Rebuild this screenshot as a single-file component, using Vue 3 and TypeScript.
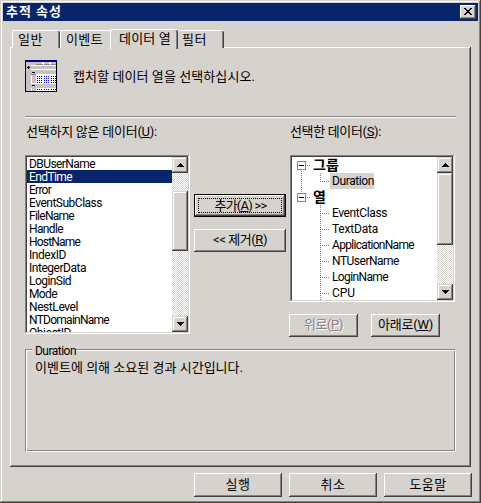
<script setup lang="ts">
import { ref, type Directive } from 'vue'

interface Item { name: string; width: number }

/* Tracks a text run so that it occupies the given width in pixels. */
const vFit: Directive<HTMLElement, number> = {
  mounted(el, { value }) {
    const n = (el.textContent ?? '').length
    const natural = el.getBoundingClientRect().width
    el.style.letterSpacing = `${(value - natural) / n}px`
  },
}

const tabs = [
  { name: '일반', width: 25, cls: 'general' },
  { name: '이벤트', width: 37, cls: 'events' },
  { name: '데이터 열', width: 52, cls: 'columns' },
  { name: '필터', width: 25, cls: 'filters' },
]
const activeTab = ref('데이터 열')

const available: Item[] = [
  { name: 'DBUserName', width: 66 },
  { name: 'EndTime', width: 43 },
  { name: 'Error', width: 22 },
  { name: 'EventSubClass', width: 73 },
  { name: 'FileName', width: 45 },
  { name: 'Handle', width: 34 },
  { name: 'HostName', width: 51 },
  { name: 'IndexID', width: 37 },
  { name: 'IntegerData', width: 57 },
  { name: 'LoginSid', width: 42 },
  { name: 'Mode', width: 28 },
  { name: 'NestLevel', width: 49 },
  { name: 'NTDomainName', width: 80 },
  { name: 'ObjectID', width: 42 },
]
const current = ref('EndTime')

const groups: { name: string; width: number; children: Item[] }[] = [
  { name: '그룹', width: 26, children: [{ name: 'Duration', width: 42 }] },
  {
    name: '열',
    width: 13,
    children: [
      { name: 'EventClass', width: 55 },
      { name: 'TextData', width: 46 },
      { name: 'ApplicationName', width: 82 },
      { name: 'NTUserName', width: 67 },
      { name: 'LoginName', width: 56 },
      { name: 'CPU', width: 23 },
    ],
  },
]
const picked = ref('Duration')
</script>

<template>
  <div class="window">
    <header class="title">
      <span v-fit="56">추적 속성</span>
      <button class="close" aria-label="닫기">
        <svg width="8" height="7" viewBox="0 0 8 7" shape-rendering="crispEdges">
          <path d="M0 0h2v1h1v1h2v-1h1v-1h2v1h-1v1h-1v1h-1v1h1v1h1v1h1v1h-2v-1h-1v-1h-2v1h-1v1h-2v-1h1v-1h1v-1h1v-1h-1v-1h-1v-1h-1z" />
        </svg>
      </button>
    </header>

    <nav class="tabs">
      <button v-for="t in tabs" :key="t.name" class="tab" :class="[t.cls, { active: t.name === activeTab }]" @click="activeTab = t.name">
        <span v-fit="t.width">{{ t.name }}</span>
      </button>
    </nav>

    <main class="panel">
      <div class="intro">
        <svg width="32" height="32" viewBox="0 0 32 32" shape-rendering="crispEdges">
          <path fill="#000" d="M0 0h32v32h-32z" />
          <path fill="#fff" d="M1 2h30v29h-30z" />
          <path fill="#000084" d="M0 0h32v2h-32z" />
          <path fill="#c6c3c6" d="M1 2h10v3h-10zM1 10h5v21h-5zM6 6h25v3h-25zM11 10h20v4h-20zM7 15h4v8h-4zM11 24h20v4h-20zM7 28h4v3h-4zM11 2h6v2h-6zM19 2h5v2h-5zM26 2h5v2h-5zM1 5h5v5h-5zM6 10h5v4h-5zM6 24h5v4h-5z" />
          <path fill="#848284" d="M11 4h7v1h-7zM19 4h6v1h-6zM26 4h5v1h-5zM6 14h5v1h-5z" />
          <path fill="#000" d="M3 6h1v3h-1zM2 7h3v1h-3zM7 12h3v1h-3zM7 25h3v1h-3z" />
          <g stroke-dasharray="1 1" fill="none">
            <path stroke="#000" d="M12 16.5h5M26 16.5h5M12 18.5h5M26 18.5h5M12 20.5h5M26 20.5h5M12 22.5h5M26 22.5h5M12 29.5h5M26 29.5h5" />
            <path stroke="#00f" d="M19 16.5h5M19 18.5h5M19 20.5h5M19 22.5h5M19 29.5h5" />
          </g>
        </svg>
        <span v-fit="182">캡처할 데이터 열을 선택하십시오.</span>
      </div>
      <div class="rule"></div>

      <div class="lists">
        <section class="side">
          <div class="label"><span v-fit="131">선택하지 않은 데이터(<u>U</u>):</span></div>
          <div class="box left-box">
            <ul class="items">
              <li v-for="i in available" :key="i.name" :class="{ selected: i.name === current }" @click="current = i.name">
                <span v-fit="i.width">{{ i.name }}</span>
              </li>
            </ul>
            <div class="scroll">
              <div class="arrow"><svg width="7" height="4" viewBox="0 0 7 4" shape-rendering="crispEdges"><path d="M3 0h1v1h1v1h1v1h1v1H0V3h1V2h1V1h1z" /></svg></div>
              <div class="thumb thumb-left"></div>
              <div class="arrow down"><svg width="7" height="4" viewBox="0 0 7 4" shape-rendering="crispEdges"><path d="M0 0h7v1H6v1H5v1H4v1H3V3H2V2H1V1H0z" /></svg></div>
            </div>
          </div>
        </section>

        <div class="moves">
          <button class="btn default"><span v-fit="52">추가(<u>A</u>) &gt;&gt;</span></button>
          <button class="btn"><span v-fit="54">&lt;&lt; 제거(<u>R</u>)</span></button>
        </div>

        <section class="side">
          <div class="label right-label"><span v-fit="91">선택한 데이터(<u>S</u>):</span></div>
          <div class="box right-box">
            <div class="tree">
              <div v-for="g in groups" :key="g.name" class="group">
                <div class="node">
                  <svg width="14" height="9" viewBox="0 0 14 9" shape-rendering="crispEdges">
                    <path fill="none" stroke="#848284" d="M.5.5h8v8h-8z" />
                    <path d="M2 4h5v1H2z" />
                    <path fill="#848284" d="M10 4h1v1h-1zM12 4h1v1h-1z" />
                  </svg>
                  <strong v-fit="g.width">{{ g.name }}</strong>
                </div>
                <div v-for="c in g.children" :key="c.name" class="leaf" @click="picked = c.name">
                  <span class="name" :class="{ picked: c.name === picked }"><span v-fit="c.width">{{ c.name }}</span></span>
                </div>
              </div>
            </div>
            <div class="scroll">
              <div class="arrow"><svg width="7" height="4" viewBox="0 0 7 4" shape-rendering="crispEdges"><path d="M3 0h1v1h1v1h1v1h1v1H0V3h1V2h1V1h1z" /></svg></div>
              <div class="thumb thumb-right"></div>
              <div class="arrow down"><svg width="7" height="4" viewBox="0 0 7 4" shape-rendering="crispEdges"><path d="M0 0h7v1H6v1H5v1H4v1H3V3H2V2H1V1H0z" /></svg></div>
            </div>
          </div>
          <div class="order">
            <button class="btn" disabled><span v-fit="39">위로(<u>P</u>)</span></button>
            <button class="btn"><span v-fit="55">아래로(<u>W</u>)</span></button>
          </div>
        </section>
      </div>

      <section class="detail">
        <h2><span v-fit="41">Duration</span></h2>
        <p><span v-fit="208">이벤트에 의해 소요된 경과 시간입니다.</span></p>
      </section>
    </main>

    <footer class="actions">
      <button class="btn"><span v-fit="25">실행</span></button>
      <button class="btn"><span v-fit="25">취소</span></button>
      <button class="btn"><span v-fit="37">도움말</span></button>
    </footer>
  </div>
</template>

<style>
body {
  background: #d6d3ce;
}
</style>

<style scoped>
* {
  box-sizing: border-box;
}
.window {
  width: 481px;
  height: 503px;
  padding: 3px;
  overflow: hidden;
  background: #d6d3ce;
  color: #000;
  font: 13px/16px Roboto, "Noto Sans CJK KR", sans-serif;
  white-space: nowrap;
  cursor: default;
  box-shadow: inset -1px -1px #424142, inset 1px 1px #d6d3ce, inset -2px -2px #848284, inset 2px 2px #fff;
}
button {
  font: inherit;
  color: inherit;
  padding: 0;
  border: 0;
  background: #d6d3ce;
}
span,
strong {
  display: inline-block;
}
u {
  text-underline-offset: 1px;
  text-decoration-thickness: 1px;
}
.title {
  display: flex;
  align-items: center;
  justify-content: space-between;
  height: 18px;
  padding: 0 2px 0 3px;
  background: #08246b;
  color: #fff;
  font-weight: 700;
}
.close,
.arrow,
.thumb {
  box-shadow: inset -1px -1px #424142, inset 1px 1px #d6d3ce, inset -2px -2px #848284, inset 2px 2px #fff;
}
.close {
  display: flex;
  width: 16px;
  height: 14px;
  padding: 3px 0 0 4px;
  box-shadow: inset -1px -1px #424142, inset 1px 1px #fff, inset -2px -2px #848284;
}

.tabs {
  display: flex;
  align-items: flex-end;
  height: 27px;
  padding-left: 9px;
}
.tab {
  height: 18px;
  padding: 0 0 0 6px;
  text-align: left;
  border-radius: 2px 2px 0 0;
  border-top: 1px solid #fff;
  border-left: 1px solid #fff;
  box-shadow: inset -1px 0 #424142, inset -2px 0 #848284;
  line-height: 15px;
}
.general {
  width: 48px;
  padding-left: 5px;
}
.events {
  width: 50px;
  padding-left: 5px;
  box-shadow: none;
}
.columns {
  width: 68px;
  padding-left: 8px;
}
.filters {
  width: 46px;
  padding-left: 4px;
  border-left: 0;
}
.tab.active {
  position: relative;
  height: 20px;
  margin-bottom: -1px;
  padding-bottom: 3px;
}

.panel {
  width: 461px;
  height: 420px;
  margin: -1px 0 0 7px;
  padding: 13px 15px 0;
  box-shadow: inset -1px -1px #424142, inset 1px 1px #fff, inset -2px -2px #848284;
}
.intro {
  display: flex;
  align-items: center;
  gap: 16px;
  height: 32px;
}
.intro span {
  padding-top: 2px;
}
.rule {
  height: 2px;
  margin-top: 24px;
  border-top: 1px solid #848284;
  border-bottom: 1px solid #fff;
}
.lists {
  display: flex;
  height: 220px;
  margin-top: 5px;
}
.side {
  width: 165px;
}
.label {
  height: 32px;
  padding: 0 0 0 1px;
  line-height: 18px;
}
.right-label {
  padding-left: 0;
}
.box {
  display: flex;
  width: 165px;
  padding: 2px;
  background: #fff;
  box-shadow: inset -1px -1px #fff, inset 1px 1px #848284, inset -2px -2px #d6d3ce, inset 2px 2px #424142;
}
.left-box {
  height: 179px;
}
.right-box {
  height: 147px;
}
.items {
  flex: 1;
  margin: 0;
  padding: 0;
  overflow: hidden;
  list-style: none;
  font-size: 12px;
}
.items li {
  height: 13px;
  padding-left: 2px;
  line-height: 14px;
}
.items .selected {
  background: #08246b;
  color: #fff;
}
.scroll {
  display: flex;
  flex-direction: column;
  width: 16px;
  background: repeating-conic-gradient(#fff 0 25%, #d6d3ce 0 50%) 0 0 / 2px 2px;
}
.arrow {
  display: flex;
  justify-content: center;
  align-items: center;
  width: 16px;
  height: 16px;
  background: #d6d3ce;
}
.down {
  margin-top: auto;
}
.thumb {
  background: #d6d3ce;
}
.thumb-left {
  height: 60px;
  margin-top: 18px;
}
.thumb-right {
  height: 72px;
}

.moves {
  display: flex;
  flex-direction: column;
  gap: 12px;
  width: 100px;
  padding: 71px 4px 0;
}
.btn {
  height: 23px;
  text-align: center;
  line-height: 20px;
  padding-bottom: 1px;
  box-shadow: inset -1px -1px #424142, inset 1px 1px #fff, inset -2px -2px #848284;
}
.default {
  padding: 0 0 0 1px;
  border: 1px solid #000;
  line-height: 16px;
  outline: 1px dotted #000;
  outline-offset: -5px;
}
.btn:disabled {
  color: #848284;
  text-shadow: 1px 1px #fff;
}
.tree {
  flex: 1;
  overflow: hidden;
}
.group {
  position: relative;
}
.node {
  display: flex;
  align-items: center;
  gap: 2px;
  height: 16px;
  padding-left: 5px;
}
.node strong {
  font-size: 14px;
}
.group:first-child::before {
  content: "";
  position: absolute;
  left: 9px;
  top: 14px;
  height: 22px;
  width: 1px;
  background: repeating-linear-gradient(#848284 0 1px, transparent 1px 2px);
}
.leaf {
  height: 16px;
  padding-left: 38px;
  font-size: 12px;
  background:
    repeating-linear-gradient(#848284 0 1px, transparent 1px 2px) 28px 0 / 1px 16px no-repeat,
    repeating-linear-gradient(90deg, #848284 0 1px, transparent 1px 2px) 28px 8px / 9px 1px no-repeat;
}
.group:first-child .leaf:last-child {
  background-size: 1px 9px, 9px 1px;
}
.name {
  height: 16px;
  padding: 0 0 0 2px;
}
.picked {
  background: #d6d3ce;
}
.order {
  display: flex;
  gap: 13px;
  margin: 12px 0 0 -1px;
}
.order .btn {
  width: 69px;
}

.detail {
  width: 431px;
  height: 103px;
  margin-top: 6px;
  border: 1px solid #848284;
  border-right-color: #fff;
  border-bottom-color: #fff;
  box-shadow: inset 1px 1px #fff, inset -1px -1px #848284;
}
.detail h2 {
  width: 44px;
  height: 14px;
  margin: -7px 0 0 6px;
  padding-left: 3px;
  background: #d6d3ce;
  font: inherit;
  font-size: 12px;
  line-height: 16px;
}
.detail p {
  margin: 3px 0 0 9px;
}
.actions {
  display: flex;
  justify-content: flex-end;
  gap: 7px;
  margin: 6px 6px 0 0;
}
.actions .btn {
  width: 88px;
  height: 24px;
  line-height: 21px;
}
</style>
